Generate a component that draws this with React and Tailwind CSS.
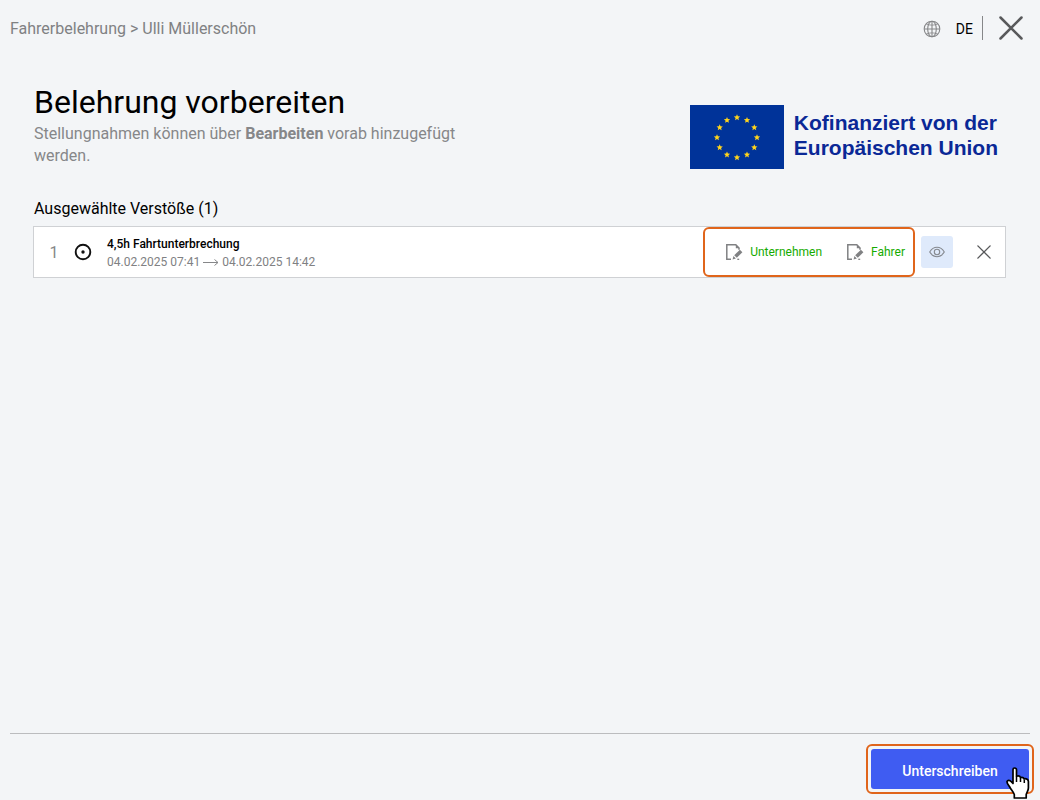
const STAR_COUNT = 12;

function starPoints(cx, cy, r) {
  const points = [];
  for (let i = 0; i < 10; i++) {
    const radius = i % 2 === 0 ? r : r * 0.45;
    const angle = (Math.PI / 5) * i - Math.PI / 2;
    points.push(`${(cx + radius * Math.cos(angle)).toFixed(2)},${(cy + radius * Math.sin(angle)).toFixed(2)}`);
  }
  return points.join(" ");
}

function EuFlag() {
  return (
    <svg viewBox="0 0 94 64" className="w-[94px] h-16 shrink-0" aria-hidden="true">
      <rect width="94" height="64" fill="#003399" />
      {Array.from({ length: STAR_COUNT }, (_, i) => {
        const angle = (Math.PI * 2 * i) / STAR_COUNT;
        return (
          <polygon key={i} fill="#ffd51c" points={starPoints(47 + 20 * Math.sin(angle), 32.5 - 20 * Math.cos(angle), 3.3)} />
        );
      })}
    </svg>
  );
}

function GlobeIcon() {
  return (
    <svg viewBox="0 0 18 18" className="w-[18px] h-[18px]" fill="none" stroke="#868789" strokeWidth="1.1" aria-hidden="true">
      <circle cx="9" cy="9" r="7.8" />
      <ellipse cx="9" cy="9" rx="4.3" ry="7.8" />
      <path d="M9 1.2v15.6M1.2 9h15.6" />
      <path d="M3.2 4c3 1.5 8.6 1.5 11.6 0M3.2 14c3-1.5 8.6-1.5 11.6 0" strokeWidth=".8" />
    </svg>
  );
}

function CloseIcon({ className, strokeWidth }) {
  return (
    <svg viewBox="0 0 24 24" className={className} fill="none" stroke="#58595b" strokeWidth={strokeWidth} strokeLinecap="round" aria-hidden="true">
      <path d="M1.5 1.5l21 21M22.5 1.5l-21 21" />
    </svg>
  );
}

function EditIcon() {
  return (
    <svg viewBox="0 0 18 18" className="w-[18px] h-[18px]" fill="none" aria-hidden="true">
      <path d="M6 16.2H1.8V1.8h9L14 5v1.8" stroke="#808183" strokeWidth="1.5" />
      <path d="M10.8 1.5l3.7 3.7h-3.7z" fill="#808183" />
      <path d="M14.9 6.8l2.5 2.5-5.6 5.4-2.6-2.5z" fill="#808183" />
      <path d="M8.4 13l2.5 2.5-3.3.9z" fill="#808183" />
      <path d="M12.3 16.3h1.9" stroke="#808183" strokeWidth="1.3" />
    </svg>
  );
}

function EyeIcon() {
  return (
    <svg viewBox="0 0 16 12" className="w-4 h-3" fill="none" stroke="#85898f" strokeWidth="1.1" aria-hidden="true">
      <path d="M.7 6C2.5 3 5 1.3 8 1.3S13.5 3 15.3 6C13.5 9 11 10.7 8 10.7S2.5 9 .7 6z" />
      <circle cx="8" cy="6" r="2.7" />
    </svg>
  );
}

function DrivingIcon() {
  return (
    <svg viewBox="0 0 18 18" className="w-[18px] h-[18px] shrink-0" aria-hidden="true">
      <circle cx="9" cy="9" r="7.3" fill="none" stroke="#111" strokeWidth="1.9" />
      <circle cx="9" cy="9" r="1.7" fill="#111" />
    </svg>
  );
}

function ArrowIcon() {
  return (
    <svg viewBox="0 0 16 8" className="w-4 h-2" fill="none" stroke="#868789" aria-hidden="true">
      <path d="M0 4.5h15M11.5 1.5l3.5 3-3.5 3" />
    </svg>
  );
}

function HandCursor() {
  return (
    <svg viewBox="0 0 24 32" className="absolute right-[2px] top-[21px] w-6 h-8 pointer-events-none" aria-hidden="true">
      <path
        d="M7 2.5C7 1.4 7.8 1 8.6 1s1.9.6 1.9 1.7v6.500c2-.5 3.600 0 4 1.300 1.800-.5 3.100 0 3.500 1.300 2.600-.4 4.400.8 4.400 2.800V21c0 2.500-1.600 4.300-2.200 6.500V31H8.300v-3.500c-1-2.500-2.800-4.400-4-6.500C3.200 18.800.8 16.500 1 14.500c.5-1.700 3-1.500 4.300.2L7 16.500z"
        fill="#fff"
        stroke="#000"
        strokeWidth="1.7"
        strokeLinejoin="round"
      />
      <path d="M10.5 9.5v5.500M14.500 11v4M18.300 12.500v3.500" stroke="#000" strokeWidth="1.5" />
    </svg>
  );
}

function Header() {
  return (
    <header className="flex items-center justify-between h-14 pl-[10px] pr-[17px]">
      <nav aria-label="Breadcrumb" className="pt-0.5 text-base text-[#808183]">
        Fahrerbelehrung &gt; Ulli Müllerschön
      </nav>
      <div className="flex items-center">
        <button className="flex items-center gap-[15px] pt-0.5 text-sm">
          <GlobeIcon />
          <span>DE</span>
        </button>
        <div className="w-px h-6 bg-[#868789] ml-[9px] mr-4" />
        <button aria-label="Schließen">
          <CloseIcon className="w-6 h-6" strokeWidth="2.5" />
        </button>
      </div>
    </header>
  );
}

function ViolationRow({ violation }) {
  return (
    <li className="flex items-center h-[52px] bg-white border border-[#cfd1d4] pr-[14px]">
      <span className="w-10 pt-0.5 text-center text-base text-[#868789]">{violation.number}</span>
      <DrivingIcon />
      <div className="flex-1 min-w-0 ml-[15px] pt-0.5">
        <p className="text-xs leading-[18px] font-medium">{violation.title}</p>
        <p className="flex items-center gap-[3px] text-xs leading-[18px] text-[#808183]">
          {violation.start} <ArrowIcon /> {violation.end}
        </p>
      </div>
      <div className="flex items-center self-stretch gap-6 border-2 border-[#e0651b] rounded-md pl-5 pr-2 text-xs text-[#16ab00]">
        {["Unternehmen", "Fahrer"].map((label) => (
          <button key={label} className="flex items-center gap-[7px]">
            <EditIcon />
            {label}
          </button>
        ))}
      </div>
      <button aria-label="Anzeigen" className="flex items-center justify-center w-8 h-8 ml-[6px] bg-[#dfeafb] rounded-[3px]">
        <EyeIcon />
      </button>
      <button aria-label="Entfernen" className="ml-6">
        <CloseIcon className="w-[14px] h-[14px]" strokeWidth="2.4" />
      </button>
    </li>
  );
}

const violations = [
  { number: 1, title: "4,5h Fahrtunterbrechung", start: "04.02.2025 07:41", end: "04.02.2025 14:42" },
];

export default function App() {
  return (
    <div className="flex flex-col min-h-screen bg-[#f3f5f7] text-black font-[Roboto,sans-serif]">
      <Header />

      <main className="flex-1 px-[34px]">
        <div className="flex items-start justify-between pt-[25px]">
          <div className="w-[450px]">
            <h1 className="text-[32px] leading-[42px]">Belehrung vorbereiten</h1>
            <p className="text-base leading-[22px] text-[#868789]">
              Stellungnahmen können über <strong className="font-bold">Bearbeiten</strong> vorab hinzugefügt
              <br />
              werden.
            </p>
          </div>
          <div className="flex items-center gap-[10px] mt-6 mr-2">
            <EuFlag />
            <p className="font-['Liberation_Sans',Arial,sans-serif] text-[21px] leading-[25px] font-bold text-[#0a2896] mb-1">
              Kofinanziert von der
              <br />
              Europäischen Union
            </p>
          </div>
        </div>

        <h2 className="mt-7 mb-[5px] text-base leading-6">Ausgewählte Verstöße (1)</h2>
        <ul className="-ml-px">
          {violations.map((v) => (
            <ViolationRow key={v.number} violation={v} />
          ))}
        </ul>
      </main>

      <footer className="flex justify-end mx-[10px] border-t border-[#bbbcbe] pt-[10px] pb-[6px]">
        <div className="relative -mr-1 border-2 border-[#e0651b] rounded-md p-[3px]">
          <button className="w-[158px] h-10 bg-[#3f5cf2] rounded-[3px] text-sm font-medium text-white pt-1">Unterschreiben</button>
          <HandCursor />
        </div>
      </footer>
    </div>
  );
}
